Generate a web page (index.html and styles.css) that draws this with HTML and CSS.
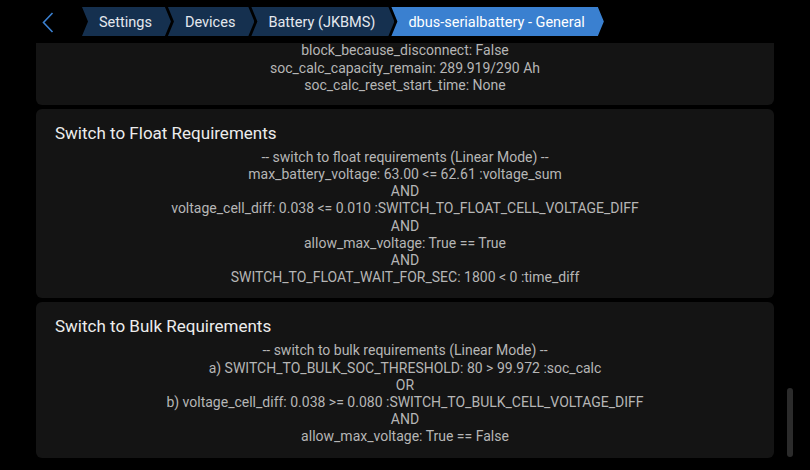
FILE: index.html
```html
<!DOCTYPE html>
<html lang="en">
<head>
	<meta name="viewport" content="width=device-width, initial-scale=1">
	<title>dbus-serialbattery - General</title>
	<link rel="stylesheet" href="styles.css">
</head>
<body>
<header class="topbar">
	<button class="back" aria-label="Back">
		<svg width="12" height="21" viewBox="0 0 12 21"><path d="M10.5 1 L1.5 10.5 L10.5 20" fill="none" stroke="#3b80d0" stroke-width="1.6"/></svg>
	</button>
	<nav class="crumbs">
		<span class="crumb">Settings</span>
		<span class="crumb">Devices</span>
		<span class="crumb">Battery (JKBMS)</span>
		<span class="crumb current">dbus-serialbattery - General</span>
	</nav>
</header>

<main class="viewport">
	<div class="list">
		<section class="card first">
			<p>block_because_disconnect: False</p>
			<p>soc_calc_capacity_remain: 289.919/290 Ah</p>
			<p>soc_calc_reset_start_time: None</p>
		</section>

		<section class="card">
			<h2>Switch to Float Requirements</h2>
			<div class="lines">
				<p>-- switch to float requirements (Linear Mode) --</p>
				<p>max_battery_voltage: 63.00 &lt;= 62.61 :voltage_sum</p>
				<p>AND</p>
				<p>voltage_cell_diff: 0.038 &lt;= 0.010 :SWITCH_TO_FLOAT_CELL_VOLTAGE_DIFF</p>
				<p>AND</p>
				<p>allow_max_voltage: True == True</p>
				<p>AND</p>
				<p>SWITCH_TO_FLOAT_WAIT_FOR_SEC: 1800 &lt; 0 :time_diff</p>
			</div>
		</section>

		<section class="card">
			<h2>Switch to Bulk Requirements</h2>
			<div class="lines">
				<p>-- switch to bulk requirements (Linear Mode) --</p>
				<p>a) SWITCH_TO_BULK_SOC_THRESHOLD: 80 &gt; 99.972 :soc_calc</p>
				<p>OR</p>
				<p>b) voltage_cell_diff: 0.038 &gt;= 0.080 :SWITCH_TO_BULK_CELL_VOLTAGE_DIFF</p>
				<p>AND</p>
				<p>allow_max_voltage: True == False</p>
			</div>
		</section>
	</div>
	<div class="scrollbar"></div>
</main>
</body>
</html>
```

FILE: styles.css
```css
* {
	box-sizing: border-box;
	margin: 0;
	padding: 0;
}

body {
	font-family: Roboto, 'Liberation Sans', sans-serif;
	background: #000;
	color: #b6b6b6;
	width: 810px;
	height: 470px;
	overflow: hidden;
}

.topbar {
	height: 43px;
	display: flex;
	align-items: flex-start;
	padding-top: 7px;
}

.back {
	width: 82px;
	height: 29px;
	display: flex;
	align-items: center;
	padding-left: 42px;
	padding-top: 2px;
	background: none;
	border: none;
}

.crumbs {
	display: flex;
}

.crumb {
	height: 29px;
	display: flex;
	align-items: center;
	padding: 1px 19px 0 17px;
	font-size: 14.5px;
	color: #e4e8ee;
	background: #15304f;
	clip-path: polygon(0 0, calc(100% - 6px) 0, 100% 50%, calc(100% - 6px) 100%, 0 100%, 6px 50%);
}

.crumb + .crumb {
	margin-left: -3px;
}

.crumb.current {
	background: #3a80d0;
	color: #fff;
}

.viewport {
	position: relative;
	height: 427px;
	overflow: hidden;
	padding: 0 36px;
}

.list {
	display: flex;
	flex-direction: column;
	gap: 4px;
	margin-top: -18px;
}

.card {
	background: #141414;
	border-radius: 6px;
	padding: 14px 19px 12px;
	text-align: center;
	font-size: 14px;
	line-height: 17.2px;
}

.card.first {
	padding-top: 17.4px;
	padding-bottom: 10.8px;
}

.card h2 {
	text-align: left;
	font-size: 17px;
	font-weight: 400;
	line-height: 20px;
	color: #ececec;
	margin-bottom: 6px;
}

.scrollbar {
	position: absolute;
	left: 787px;
	top: 345px;
	width: 6px;
	height: 69px;
	border-radius: 3px;
	background: #2b2b2b;
}
```
